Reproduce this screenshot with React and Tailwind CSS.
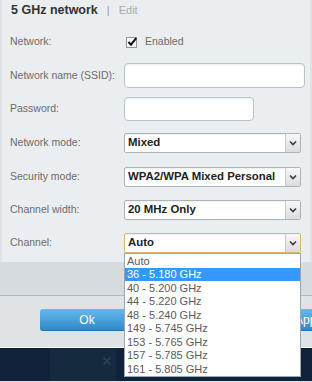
import React from 'react'

const channels = [
  'Auto',
  '36 - 5.180 GHz',
  '40 - 5.200 GHz',
  '44 - 5.220 GHz',
  '48 - 5.240 GHz',
  '149 - 5.745 GHz',
  '153 - 5.765 GHz',
  '157 - 5.785 GHz',
  '161 - 5.805 GHz',
]

function Chevron() {
  return (
    <svg width="8" height="6" viewBox="0 0 8 6">
      <path d="M1 1.5 L4 4.5 L7 1.5" fill="none" stroke="#3a3a3a" strokeWidth="1.6" />
    </svg>
  )
}

function Select({ value, focused }) {
  return (
    <div
      className={`flex h-[20px] w-[177px] items-stretch rounded-[2px] border bg-white shadow-[inset_0_1px_1px_rgba(0,0,0,0.06)] ${
        focused ? 'border-[#d9b66c]' : 'border-[#aab3ba]'
      }`}
    >
      <div className="flex flex-1 items-center pl-[3px] text-[11.4px] font-bold text-[#222]">{value}</div>
      <div className="flex w-[15px] items-center justify-center border-l border-[#c4cacf] bg-gradient-to-b from-[#f8f8f8] to-[#dcdcdc]">
        <Chevron />
      </div>
    </div>
  )
}

function Row({ label, mt, h, children }) {
  return (
    <div className={`flex items-center ${mt} ${h}`}>
      <div className="w-[122px] shrink-0 pl-[8px] text-[10.5px] text-[#6b6b6b]">{label}</div>
      {children}
    </div>
  )
}

export default function App() {
  return (
    <div className="relative h-[382px] w-[312px] overflow-hidden bg-[#dde2e5] font-['Liberation_Sans',Arial,sans-serif]">
      <div className="ml-[2px] mr-[2px] h-[262px] bg-[#ebeef1]">
        <div className="flex h-[20px] items-center pl-[9px]">
          <span className="text-[12.5px] font-bold text-[#333]">5 GHz network</span>
          <span className="ml-[9px] text-[11px] text-[#9a9a9a]">|</span>
          <span className="ml-[9px] text-[11px] text-[#a8a8a8]">Edit</span>
        </div>

        <Row label="Network:" mt="mt-[12px]" h="h-[20px]">
          <div className="flex items-center">
            <svg width="12" height="12" viewBox="0 0 12 12" className="ml-[2px]">
              <rect x="0.5" y="1.5" width="10" height="10" fill="#f6f8fa" stroke="#8e979e" />
              <path d="M2.5 6 L5 8.7 L10.2 2.2" fill="none" stroke="#111" strokeWidth="2" />
            </svg>
            <span className="ml-[7px] text-[10.5px] text-[#6b6b6b]">Enabled</span>
          </div>
        </Row>

        <Row label="Network name (SSID):" mt="mt-[11px]" h="h-[25px]">
          <div className="h-[25px] w-[181px] rounded-[4px] border border-[#b9c3ca] bg-white shadow-[inset_0_1px_2px_rgba(0,0,0,0.08)]" />
        </Row>

        <Row label="Password:" mt="mt-[9px]" h="h-[24px]">
          <div className="h-[24px] w-[130px] rounded-[4px] border border-[#b9c3ca] bg-white shadow-[inset_0_1px_2px_rgba(0,0,0,0.08)]" />
        </Row>

        <Row label="Network mode:" mt="mt-[12px]" h="h-[20px]">
          <Select value="Mixed" />
        </Row>

        <Row label="Security mode:" mt="mt-[14px]" h="h-[20px]">
          <Select value="WPA2/WPA Mixed Personal" />
        </Row>

        <Row label="Channel width:" mt="mt-[13px]" h="h-[20px]">
          <Select value="20 MHz Only" />
        </Row>

        <Row label="Channel:" mt="mt-[13px]" h="h-[20px]">
          <Select value="Auto" focused />
        </Row>
      </div>

      <div className="h-[34px] border-b border-[#b3bbc2] bg-[#d6dbdf]" />
      <div className="flex h-[51px] bg-[#dfe3e6] pt-[13px]">
        <div className="ml-[40px] flex h-[22px] w-[94px] shrink-0 items-center justify-center rounded-[3px] border-b border-[#2273ad] bg-gradient-to-b from-[#66b9ea] to-[#2e89c9] text-[12px] text-white">
          Ok
        </div>
        <div className="ml-[131px] flex h-[22px] w-[90px] shrink-0 items-center justify-center rounded-[3px] border-b border-[#2273ad] bg-gradient-to-b from-[#66b9ea] to-[#2e89c9] text-[12px] text-white">
          Apply
        </div>
      </div>
      <div className="h-px bg-white" />
      <div className="flex h-[33px] bg-[#10233a]">
        <div className="ml-[50px] flex h-full w-[66px] items-start justify-end bg-[#15293f] pr-[4px] pt-[8px]">
          <svg width="10" height="10" viewBox="0 0 10 10">
            <path d="M1.5 1.5 L8.5 8.5 M8.5 1.5 L1.5 8.5" stroke="#2a3e52" strokeWidth="2" />
          </svg>
        </div>
      </div>

      <div className="absolute left-[124px] top-[253px] h-[124px] w-[177px] border border-[#9ba6b0] bg-white">
        {channels.map((c, i) => (
          <div
            key={c}
            className={`flex h-[13.5px] items-center pl-[2px] text-[11px] ${
              i === 1 ? 'bg-[#3399ff] text-white' : 'text-[#5a5a5a]'
            }`}
          >
            {c}
          </div>
        ))}
      </div>
    </div>
  )
}
